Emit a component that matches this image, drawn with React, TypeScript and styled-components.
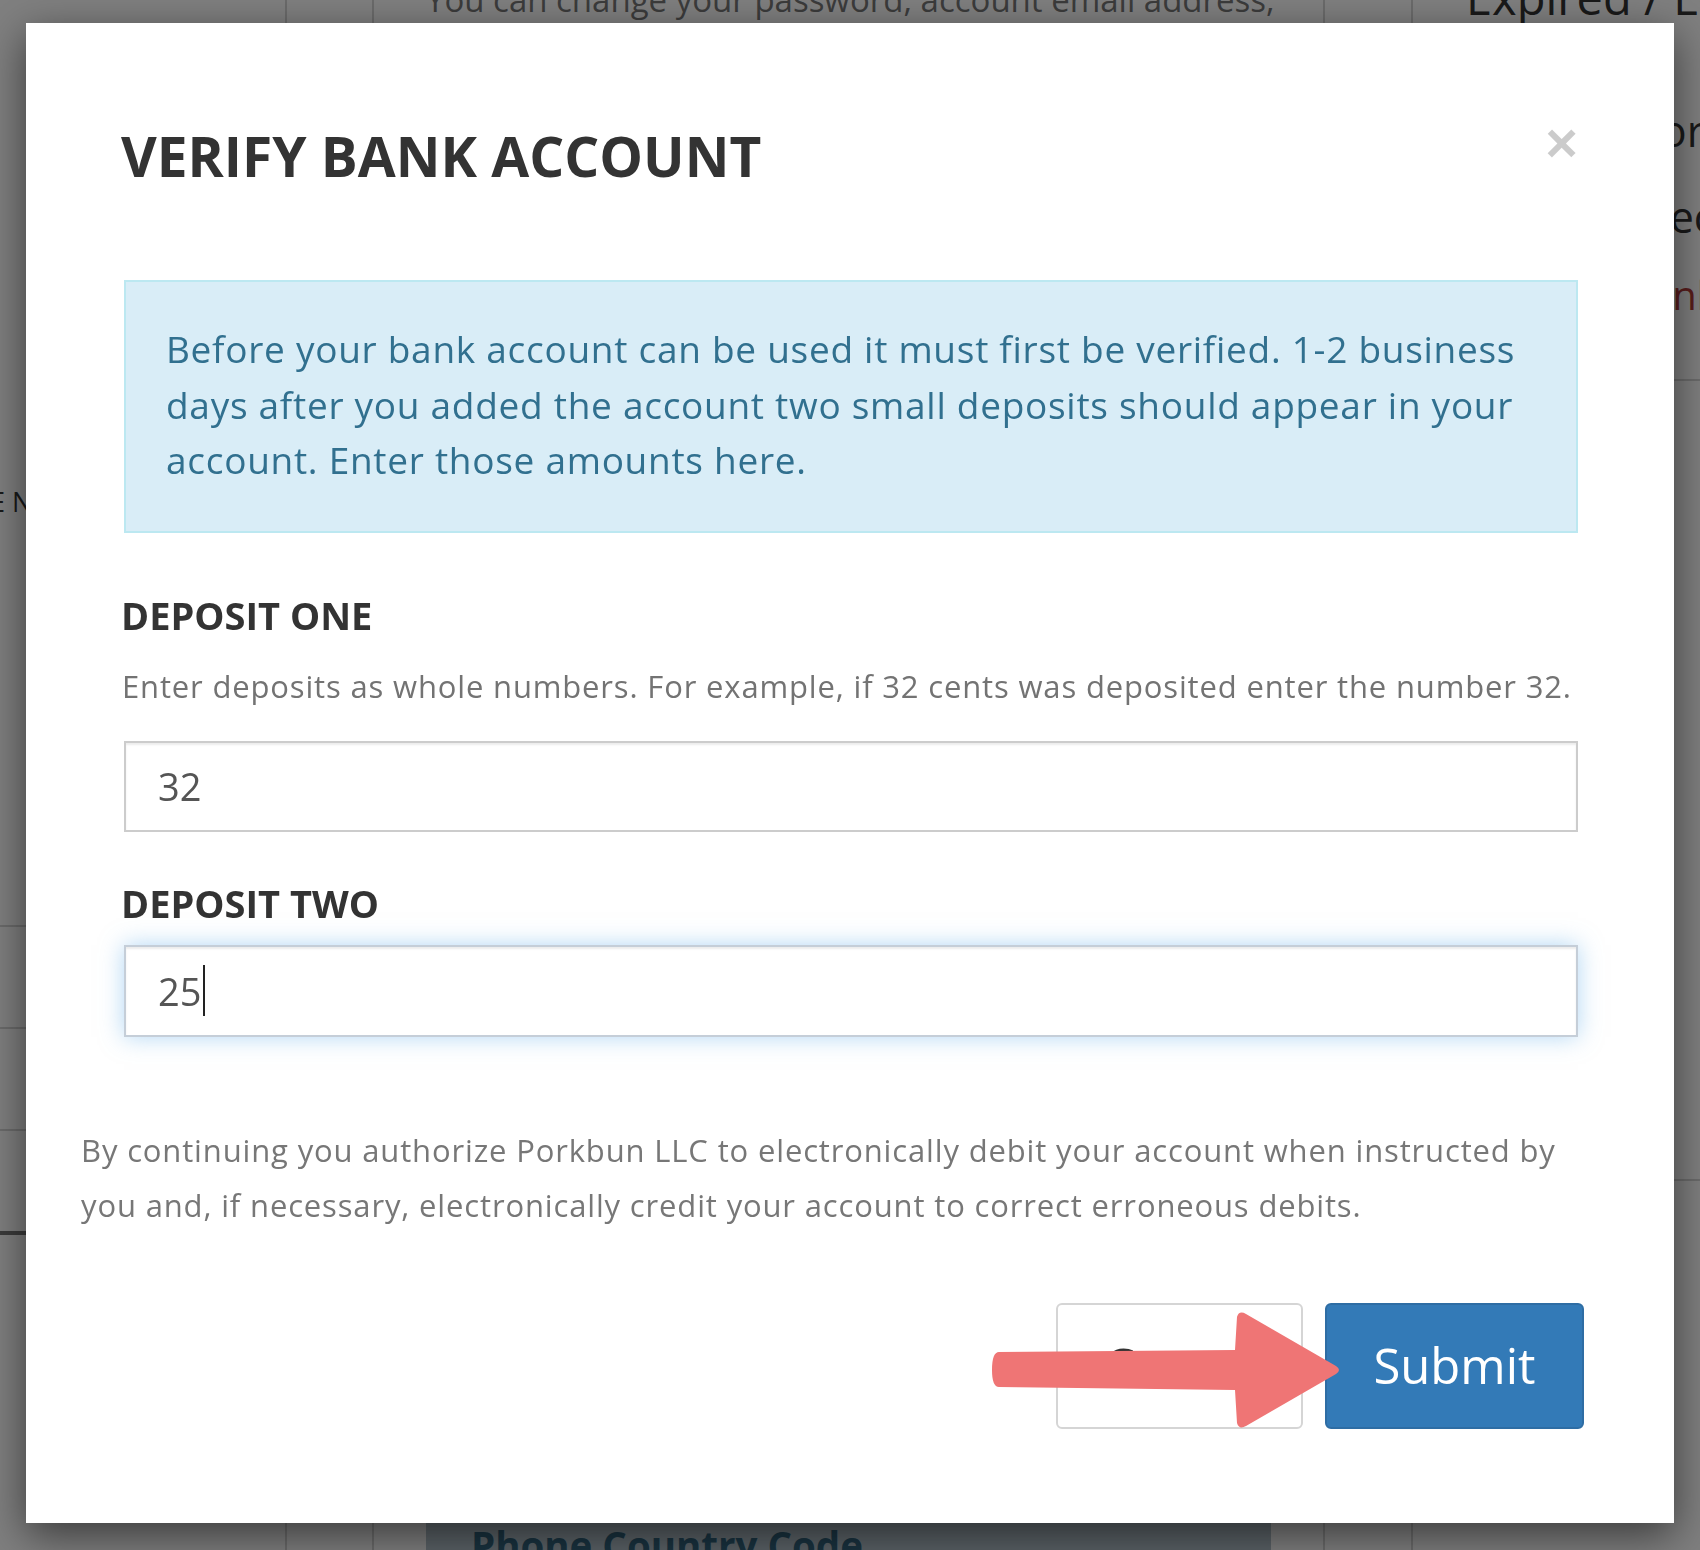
import React from "react";
import styled, { createGlobalStyle } from "styled-components";

const GlobalStyle = createGlobalStyle`
  html, body { margin: 0; padding: 0; }
  body {
    font-family: "Open Sans", "Noto Sans", "Liberation Sans", sans-serif;
    background: #fff;
    overflow: hidden;
  }
  * { box-sizing: border-box; }
`;

/* ---------- page behind the dialog ---------- */

const Page = styled.div`
  display: grid;
  grid-template-columns: 287px 87px 951px 88px 1fr;
  width: 1700px;
  height: 1550px;
  overflow: hidden;
  background: #fff;
`;

const Column = styled.div<{ $divider?: boolean; $padX?: number }>`
  display: flex;
  flex-direction: column;
  min-width: 0;
  overflow: hidden;
  padding: 0 ${(p) => p.$padX ?? 0}px;
  border-right: ${(p) => (p.$divider ? "2px solid #d6d6d6" : "none")};
`;

const SideFragment = styled.div`
  margin: 486px 0 0 -10px;
  font-size: 27px;
  line-height: 32px;
  color: #333;
  white-space: nowrap;
`;

const TableRow = styled.div<{ $strong?: boolean; $first?: boolean }>`
  height: 102px;
  margin-top: ${(p) => (p.$first ? "407px" : "0")};
  border-top: ${(p) => (p.$strong ? "4px solid #777" : "2px solid #d6d6d6")};
`;

const TopText = styled.div`
  margin-top: -25px;
  font-size: 33px;
  line-height: 50px;
  color: #777;
  white-space: nowrap;
`;

const PhoneBlock = styled.div`
  margin-top: auto;
  height: 80px;
  padding: 51px 0 0 45px;
  background: #b5c4cd;
  color: #336680;
  font-size: 38.5px;
  font-weight: 700;
  line-height: 48px;
  white-space: nowrap;
`;

const Heading = styled.div`
  margin: -31px 0 0 53px;
  font-size: 47px;
  line-height: 56px;
  color: #333;
  white-space: nowrap;
`;

const SideWord = styled.div<{ $offset: number; $gap: number; $danger?: boolean }>`
  margin-top: ${(p) => p.$gap}px;
  padding-left: ${(p) => p.$offset}px;
  font-size: ${(p) => (p.$danger ? 40 : 43)}px;
  line-height: ${(p) => (p.$danger ? 48 : 52)}px;
  color: ${(p) => (p.$danger ? "#b23a38" : "#333")};
  white-space: nowrap;
`;

const SideRule = styled.div<{ $gap: number }>`
  margin-top: ${(p) => p.$gap}px;
  border-top: 2px solid #d6d6d6;
`;

/* ---------- dialog ---------- */

const Backdrop = styled.div`
  position: fixed;
  inset: 0;
  background: rgba(0, 0, 0, 0.5);
  display: flex;
  justify-content: center;
  align-items: flex-start;
  padding-top: 23px;
`;

const Dialog = styled.div`
  width: 1648px;
  background: #fff;
  box-shadow: 0 12px 40px rgba(0, 0, 0, 0.55);
  display: flex;
  flex-direction: column;
  padding: 103px 0 94px;
`;

const Header = styled.div`
  display: flex;
  justify-content: space-between;
  align-items: flex-start;
  padding: 0 96px 0 95px;
`;

const Title = styled.h4`
  margin: 0;
  font-size: 55px;
  line-height: 60px;
  font-weight: 700;
  color: #333;
`;

const CloseButton = styled.button`
  margin-top: -11px;
  padding: 0;
  border: 0;
  background: transparent;
  font-family: "Liberation Sans", Arial, sans-serif;
  font-size: 56px;
  font-weight: 700;
  line-height: 56px;
  color: #000;
  opacity: 0.2;
  cursor: pointer;
`;

const Body = styled.div`
  display: flex;
  flex-direction: column;
  margin-top: 94px;
  padding: 0 96px 0 98px;
`;

const Alert = styled.div`
  background: #d9edf7;
  border: 2px solid #bce8f1;
  color: #31708f;
  padding: 39px 36px 43px 40px;
  font-size: 37px;
  letter-spacing: 0.72px;
  line-height: 55.5px;
`;

const Label = styled.label<{ $gap: number }>`
  display: block;
  margin-top: ${(p) => p.$gap}px;
  margin-left: -3px;
  font-size: 38px;
  line-height: 44px;
  font-weight: 700;
  color: #333;
`;

const Help = styled.div`
  margin-top: 27px;
  margin-left: -2px;
  font-size: 31px;
  letter-spacing: 0.84px;
  line-height: 45px;
  color: #737373;
  white-space: nowrap;
`;

const Field = styled.div<{ $gap: number; $focused?: boolean }>`
  display: flex;
  align-items: center;
  margin-top: ${(p) => p.$gap}px;
  height: ${(p) => (p.$focused ? 92 : 91)}px;
  padding: 0 32px;
  background: #fff;
  border: 2px solid ${(p) => (p.$focused ? "#c5ced8" : "#cccccc")};
  box-shadow: ${(p) =>
    p.$focused
      ? "inset 0 2px 2px rgba(0,0,0,.075), 0 0 22px rgba(102,175,233,.5)"
      : "inset 0 2px 2px rgba(0,0,0,.075)"};
  font-size: 38px;
  color: #555;
`;

const Caret = styled.span`
  display: inline-block;
  width: 2px;
  height: 51px;
  margin-left: 2px;
  background: #222;
`;

const Disclaimer = styled.p`
  margin: 86px 0 0;
  padding: 0 90px 0 55px;
  font-size: 31px;
  letter-spacing: 0.85px;
  line-height: 55px;
  color: #777;
`;

const Footer = styled.div`
  display: flex;
  justify-content: flex-end;
  margin-top: 70px;
  padding-right: 90px;
`;

const ButtonGroup = styled.div`
  position: relative;
  display: flex;
  gap: 22px;
`;

const Button = styled.button<{ $primary?: boolean }>`
  height: 126px;
  width: ${(p) => (p.$primary ? 259 : 247)}px;
  border-radius: 6px;
  border: 2px solid ${(p) => (p.$primary ? "#2e6da4" : "#d5d5d5")};
  background: ${(p) => (p.$primary ? "#337ab7" : "#fff")};
  color: ${(p) => (p.$primary ? "#fff" : "#333")};
  font-family: "Open Sans", sans-serif;
  font-size: 49px;
  line-height: 1;
  cursor: pointer;
`;

const ArrowMark = styled.svg`
  position: absolute;
  left: -73px;
  top: -3px;
  width: 370px;
  height: 140px;
  pointer-events: none;
`;

export default function App() {
  return (
    <>
      <GlobalStyle />
      <Page>
        <Column $divider>
          <SideFragment>E Nameservers</SideFragment>
          <TableRow $first />
          <TableRow />
          <TableRow />
          <TableRow $strong />
        </Column>
        <Column $divider />
        <Column $divider $padX={52}>
          <TopText>You can change your password, account email address,</TopText>
          <PhoneBlock>Phone Country Code</PhoneBlock>
        </Column>
        <Column $divider />
        <Column>
          <Heading>Expired / Locked</Heading>
          <SideWord $offset={195} $gap={80}>Information</SideWord>
          <SideWord $offset={172} $gap={34}>Protected</SideWord>
          <SideWord $offset={230} $gap={28} $danger>Unlocked</SideWord>
          <SideRule $gap={60} />
          <SideRule $gap={798} />
        </Column>
      </Page>

      <Backdrop>
        <Dialog role="dialog" aria-label="Verify Bank Account">
          <Header>
            <Title>VERIFY BANK ACCOUNT</Title>
            <CloseButton aria-label="Close">×</CloseButton>
          </Header>

          <Body>
            <Alert>
              Before your bank account can be used it must first be verified. 1-2 business days
              after you added the account two small deposits should appear in your account. Enter
              those amounts here.
            </Alert>

            <Label $gap={60}>DEPOSIT ONE</Label>
            <Help>
              Enter deposits as whole numbers. For example, if 32 cents was deposited enter the
              number 32.
            </Help>
            <Field $gap={32}>32</Field>

            <Label $gap={49}>DEPOSIT TWO</Label>
            <Field $gap={20} $focused>
              25
              <Caret />
            </Field>
          </Body>

          <Disclaimer>
            By continuing you authorize Porkbun LLC to electronically debit your account when
            instructed by you and, if necessary, electronically credit your account to correct
            erroneous debits.
          </Disclaimer>

          <Footer>
            <ButtonGroup>
              <Button>Cancel</Button>
              <Button $primary>Submit</Button>
              <ArrowMark viewBox="0 0 370 140">
                <path
                  d="M 16 52 L 252 50 L 254 17 Q 256 10 263 14 L 353 66 Q 359 70 353 74 L 263 126 Q 256 130 254 123 L 252 90 L 16 87 Q 9 87 9 70 Q 9 52 16 52 Z"
                  fill="#ef7575"
                />
              </ArrowMark>
            </ButtonGroup>
          </Footer>
        </Dialog>
      </Backdrop>
    </>
  );
}
